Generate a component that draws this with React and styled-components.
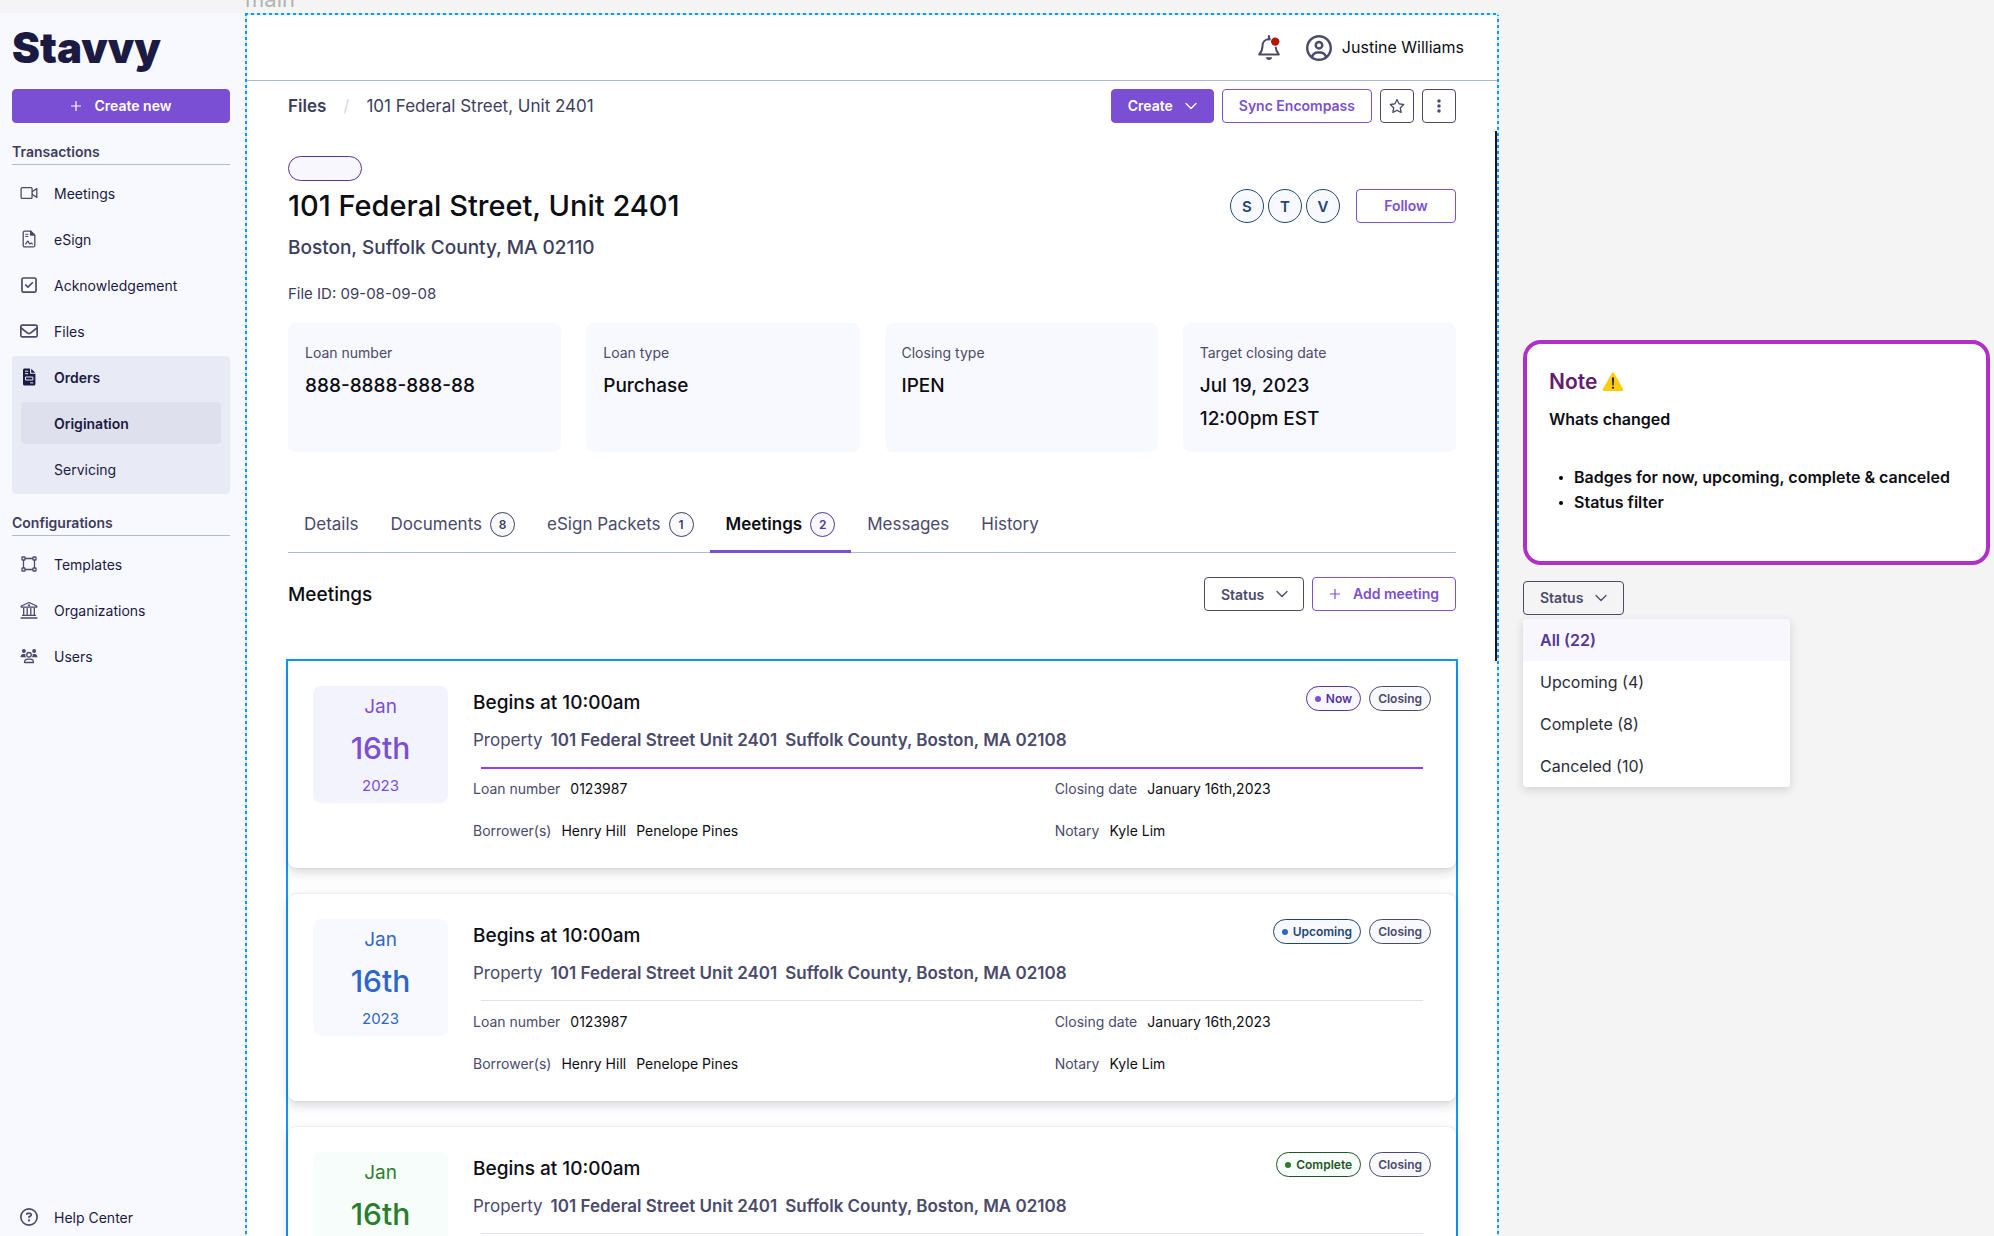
import React from 'react';
import styled, { createGlobalStyle, css } from 'styled-components';
import {
  FaRegSquareCheck,
  FaRegEnvelope,
  FaRegCircleUser,
  FaRegCircleQuestion,
  FaRegStar,
  FaEllipsisVertical,
} from 'react-icons/fa6';

const c = {
  canvas: '#f4f4f4',
  surface: '#f8f9fe',
  ink: '#0d0d14',
  navy: '#1b1a42',
  text: '#3d3d5c',
  muted: '#4a4a6b',
  rule: '#b4b9d3',
  purple: '#7b4fd3',
  deepPurple: '#56349a',
  lilac: '#f9f7fe',
  blue: '#0d99ff',
};

const GlobalStyle = createGlobalStyle`
  *, *::before, *::after { box-sizing: border-box; }
  body {
    margin: 0;
    background: ${c.canvas};
    color: ${c.ink};
    font-family: Inter, "Liberation Sans", sans-serif;
    font-size: 16px;
    line-height: 25px;
  }
  h1, h2, h3, p, ul, dl, dd { margin: 0; padding: 0; }
  ul { list-style: none; }
  a { color: inherit; text-decoration: none; }
  button, select { font: inherit; color: inherit; cursor: pointer; }
`;

/* ---------- canvas ---------- */

const Canvas = styled.div`
  display: grid;
  grid-template-columns: 245px minmax(0, 1fr) 495px;
  grid-template-rows: 13px minmax(0, 1fr);
  height: 100vh;
  overflow: hidden;
`;

const FrameLabel = styled.div`
  grid-column: 2;
  display: flex;
  align-items: flex-end;
  padding-bottom: 2px;
  overflow: hidden;
  font-size: 22px;
  line-height: 24px;
  color: #b3b3b3;
`;

/* ---------- sidebar ---------- */

const Sidebar = styled.aside`
  grid-row: 2;
  grid-column: 1;
  display: flex;
  flex-direction: column;
  padding: 14px 15px 0 12px;
  background: ${c.surface};
`;

const Logo = styled.a`
  height: 62px;
  font-size: 42px;
  line-height: 42px;
  font-weight: 900;
  color: ${c.navy};
`;

const NavHeading = styled.h2`
  margin: 19px 0 7px;
  padding-bottom: 2px;
  border-bottom: 1px solid ${c.rule};
  font-size: 14px;
  line-height: 20px;
  font-weight: 600;
  color: ${c.text};
`;

const NavList = styled.ul`
  display: flex;
  flex-direction: column;
  gap: 4px;
`;

const NavGroup = styled.li`
  padding-bottom: 4px;
  border-radius: 4px;
  background: #e8ebf5;
`;

const NavLink = styled.a`
  display: flex;
  align-items: center;
  gap: 16px;
  height: ${(p) => (p.$compact ? 38 : 42)}px;
  padding: 0 8px;
  font-size: 14px;
  font-weight: ${(p) => (p.$active ? 600 : 400)};
  color: ${c.navy};

  svg {
    flex: none;
    width: 18px;
    height: 18px;
    color: ${(p) => (p.$active ? c.navy : c.muted)};
  }
`;

const SubLink = styled.a`
  display: flex;
  align-items: center;
  height: 42px;
  margin: 4px 9px 0;
  padding-left: 33px;
  border-radius: 4px;
  background: ${(p) => (p.$active ? '#dee0ed' : 'transparent')};
  font-size: 14px;
  font-weight: ${(p) => (p.$active ? 600 : 400)};
  color: ${c.navy};
`;

const NavFooter = styled.div`
  margin-top: auto;
`;

/* ---------- buttons ---------- */

const tones = {
  solid: css`
    border-color: ${c.purple};
    background: ${c.purple};
    color: #fff;
  `,
  outline: css`
    border-color: ${c.purple};
    background: #fff;
    color: ${c.purple};
  `,
  neutral: css`
    border-color: ${c.muted};
    background: transparent;
    color: ${c.muted};
  `,
};

const Button = styled.button`
  display: inline-flex;
  align-items: center;
  justify-content: center;
  gap: 12px;
  flex: none;
  height: 34px;
  min-width: ${(p) => p.$min || 0}px;
  padding: 0 16px;
  border: 1px solid;
  border-radius: 4px;
  font-size: 14px;
  line-height: 20px;
  font-weight: 600;
  ${(p) => tones[p.$tone || 'outline']}
`;

const IconButton = styled(Button)`
  width: 34px;
  padding: 0;
`;

const SelectField = styled.label`
  position: relative;
  display: flex;
  align-items: center;
  width: 100px;
  color: ${c.muted};

  select {
    appearance: none;
    width: 100%;
    height: 34px;
    padding: 0 16px;
    border: 1px solid ${c.muted};
    border-radius: 4px;
    background: #fff;
    font-size: 14px;
    font-weight: 600;
  }

  svg {
    position: absolute;
    right: 16px;
    pointer-events: none;
  }
`;

/* ---------- main frame ---------- */

const dashX = `repeating-linear-gradient(90deg, ${c.blue} 0 3px, #cfe9fd 3px 6px)`;
const dashY = `repeating-linear-gradient(180deg, ${c.blue} 0 3px, #cfe9fd 3px 6px)`;

const Main = styled.main`
  position: relative;
  grid-row: 2;
  grid-column: 2;
  min-height: 0;
  padding: 2px;
  background:
    ${dashX} top / 100% 2px no-repeat,
    ${dashY} left / 2px 100% no-repeat,
    ${dashY} right / 2px 100% no-repeat,
    #fff;
`;

const ScrollThumb = styled.div`
  position: absolute;
  top: 118px;
  right: 2px;
  width: 2px;
  height: 530px;
  background: #16161c;
`;

const Header = styled.header`
  display: flex;
  align-items: center;
  justify-content: flex-end;
  gap: 25px;
  height: 66px;
  padding-right: 33px;
  border-bottom: 1px solid ${c.rule};
`;

const PlainButton = styled.button`
  display: flex;
  align-items: center;
  gap: 10px;
  padding: 0;
  border: 0;
  background: none;
  color: ${c.ink};

  svg {
    color: ${c.muted};
  }
`;

const Content = styled.div`
  padding: 8px 41px 0;
`;

const Bar = styled.div`
  display: flex;
  align-items: center;
  justify-content: space-between;
`;

const Cluster = styled.div`
  display: flex;
  align-items: center;
  gap: ${(p) => p.$gap || 8}px;
`;

const Crumbs = styled.nav`
  display: flex;
  gap: 17px;
  font-size: 17px;
  color: ${c.text};

  a {
    font-weight: 600;
  }

  i {
    font-style: normal;
    color: #d5d9e8;
  }
`;

const Pill = styled.span`
  display: inline-flex;
  align-items: center;
  gap: 5px;
  height: 25px;
  padding: 0 8px;
  border: 1px solid ${(p) => p.$color};
  border-radius: 13px;
  background: ${(p) => p.$bg};
  font-size: 12px;
  line-height: 16px;
  font-weight: 600;
  color: ${(p) => p.$color};
`;

const Dot = styled.span`
  width: 6px;
  height: 6px;
  border-radius: 50%;
  background: ${(p) => p.$color};
`;

const StatusPill = styled(Pill)`
  display: flex;
  width: 74px;
  margin-top: 33px;
`;

const Title = styled.h1`
  font-size: 29px;
  line-height: 34px;
  font-weight: 500;
`;

const TitleBar = styled(Bar)`
  margin-top: 8px;
`;

const Initial = styled.span`
  display: flex;
  align-items: center;
  justify-content: center;
  width: 34px;
  height: 34px;
  border: 1px solid #1f4772;
  border-radius: 50%;
  background: ${c.surface};
  font-size: 15px;
  font-weight: 600;
  color: #1f4772;
`;

const Address = styled.p`
  margin-top: 12px;
  font-size: 19px;
  font-weight: 500;
  color: ${c.text};
`;

const FileId = styled.p`
  margin-top: 21px;
  font-size: 15px;
  color: ${c.text};
`;

const Facts = styled.dl`
  display: grid;
  grid-template-columns: repeat(4, minmax(0, 1fr));
  gap: 25px;
  margin-top: 17px;
`;

const Fact = styled.div`
  min-height: 129px;
  padding: 17px;
  border-radius: 8px;
  background: ${c.surface};

  dt {
    margin-bottom: 4px;
    font-size: 14px;
    line-height: 25px;
    color: ${c.muted};
  }

  dd {
    font-size: 19px;
    line-height: 33px;
    font-weight: 500;
  }
`;

const Tabs = styled.nav`
  display: flex;
  margin-top: 46px;
  border-bottom: 1px solid ${c.rule};
`;

const Tab = styled.a`
  display: flex;
  align-items: center;
  gap: 8px;
  height: 55px;
  margin-bottom: -1px;
  padding: 0 16px;
  border-bottom: 3px solid ${(p) => (p.$active ? c.purple : 'transparent')};
  font-size: 17px;
  font-weight: ${(p) => (p.$active ? 600 : 400)};
  color: ${(p) => (p.$active ? c.ink : c.muted)};
`;

const Count = styled.span`
  display: flex;
  align-items: center;
  justify-content: center;
  width: 25px;
  height: 25px;
  border: 1px solid;
  border-radius: 50%;
  background: ${c.surface};
  font-size: 12px;
  font-weight: 600;
  color: ${(p) => (p.$active ? c.deepPurple : c.text)};
`;

const SectionBar = styled(Bar)`
  margin: 24px 0 48px;
`;

const SectionTitle = styled.h2`
  font-size: 19px;
  font-weight: 500;
`;

/* ---------- meeting cards ---------- */

const MeetingList = styled.ul`
  display: flex;
  flex-direction: column;
  gap: 26px;
  margin: 0 -2px;
  border: 2px solid ${c.blue};
  border-bottom: 0;
`;

const MeetingCard = styled.li`
  display: flex;
  align-items: flex-start;
  gap: 25px;
  padding: 25px 25px 27px;
  border-radius: 8px;
  background: #fff;
  box-shadow:
    0 0 2px rgba(30, 40, 70, 0.16),
    0 5px 10px rgba(40, 50, 70, 0.13),
    0 2px 20px rgba(0, 0, 0, 0.05);
`;

const DateTile = styled.time`
  display: flex;
  flex: none;
  flex-direction: column;
  align-items: center;
  width: 135px;
  height: 117px;
  padding-top: 8px;
  border-radius: 8px;
  background: ${(p) => p.$bg};
  color: ${(p) => p.$color};
  font-size: 19px;
  font-weight: 400;

  b {
    margin: 9px 0;
    font-size: 30px;
    line-height: 40px;
    font-weight: 500;
  }

  small {
    font-size: 15px;
    line-height: 18px;
  }
`;

const MeetingBody = styled.div`
  flex: 1;
  min-width: 0;
`;

const MeetingHead = styled(Bar)`
  align-items: flex-start;

  h3 {
    font-size: 19px;
    line-height: 33px;
    font-weight: 500;
  }
`;

const Property = styled.p`
  display: flex;
  gap: 8px;
  margin-top: 9px;
  font-size: 17px;
  color: ${c.muted};

  strong {
    font-weight: 600;
  }
`;

const Divider = styled.div`
  height: 2px;
  margin: 14px 8px 10px;
  border-top: ${(p) => (p.$current ? '2px solid #8f3ffb' : '1px solid #e0e3ee')};
`;

const Facets = styled.dl`
  display: grid;
  grid-template-columns: minmax(0, 17fr) minmax(0, 11fr);
  row-gap: 22px;
  font-size: 14px;
  line-height: 20px;

  div {
    display: flex;
    gap: 10px;
  }

  dt {
    color: ${c.muted};
  }
`;

/* ---------- annotations ---------- */

const Annotations = styled.section`
  grid-row: 2;
  grid-column: 3;
  padding: 327px 4px 0 24px;
`;

const Note = styled.article`
  padding: 25px 21px 46px 22px;
  border: 4px solid #b02fc4;
  border-radius: 18px;
  background: #fff;

  h2 {
    display: flex;
    align-items: center;
    gap: 5px;
    font-size: 21px;
    line-height: 25px;
    font-weight: 600;
    color: #651b70;
  }

  p,
  li {
    font-weight: 600;
  }

  p {
    margin: 13px 0 33px;
  }

  ul {
    padding-left: 25px;
  }

  li {
    white-space: nowrap;
  }

  li::before {
    content: '';
    float: left;
    width: 4px;
    height: 4px;
    margin: 11px 0 0 -15px;
    border-radius: 50%;
    background: #000;
  }
`;

const Dropdown = styled.div`
  margin-top: 16px;
`;

const Menu = styled.ul`
  width: 267px;
  margin-top: 4px;
  overflow: hidden;
  border-radius: 4px;
  background: #fff;
  box-shadow: 0 3px 10px rgba(30, 40, 70, 0.16);
`;

const MenuItem = styled.button`
  display: block;
  width: 100%;
  height: 42px;
  padding: 0 17px;
  border: 0;
  background: ${(p) => (p.$active ? c.lilac : '#fff')};
  text-align: left;
  font-weight: ${(p) => (p.$active ? 600 : 400)};
  color: ${(p) => (p.$active ? c.deepPurple : '#2b2b38')};
`;

/* ---------- icons ---------- */

const Icon = ({ size = 18, box = 18, children, width = 1.3 }) => (
  <svg
    width={size}
    height={size}
    viewBox={`0 0 ${box} ${box}`}
    fill="none"
    stroke="currentColor"
    strokeWidth={width}
    strokeLinejoin="round"
    aria-hidden="true"
  >
    {children}
  </svg>
);

const Plus = () => (
  <Icon size={12} box={12} width={1.2}>
    <path d="M6 1v10M1 6h10" />
  </Icon>
);

const Chevron = () => (
  <Icon size={12} box={12} width={1.3}>
    <path d="M1 3.5l5 5 5-5" strokeLinecap="round" />
  </Icon>
);

const VideoIcon = () => (
  <Icon>
    <rect x="1.1" y="3.6" width="11" height="10.8" rx="1.2" />
    <path d="M12.1 7.8l4.7-3.2v8.8l-4.7-3.2" />
  </Icon>
);

const SignIcon = () => (
  <Icon>
    <path d="M4.7 1.1h6.1l4 4v10.3c0 .9-.6 1.5-1.5 1.5H4.7c-.9 0-1.5-.6-1.5-1.5V2.6c0-.9.6-1.5 1.5-1.5z" />
    <path d="M10.6 1.3v3.8h4z" fill="currentColor" />
    <path d="M5.3 4.3h3M5.3 6.5h3" strokeWidth="1" />
    <path d="M5.2 14.2c1.3-.4 1.6-3 2.8-3 1 0 .5 2.6 1.6 2.6.8 0 .9-.9 1.7-.6.5.2.7.9 1.5.9" />
  </Icon>
);

const OrdersIcon = () => (
  <svg width="18" height="18" viewBox="0 0 18 18" aria-hidden="true">
    <path
      fill="currentColor"
      d="M4.5.5H10v4.3c0 .6.4 1 1 1h4.4V16c0 .8-.7 1.5-1.5 1.5H4.500c-.8 0-1.500-.7-1.500-1.500V2C3 1.200 3.700.500 4.500.500zM11.200.700l4.100 4H11.200z"
    />
    <path
      fill="none"
      stroke="#e8ebf5"
      strokeWidth="1"
      d="M5 3.200h3.200M5 5.700h3.200M5.500 9h7.400v3H5.500zM10.200 14.900h3"
    />
  </svg>
);

const TemplateIcon = () => (
  <Icon>
    <path d="M5 3.5h8M5 14.5h8M3.5 5v8M14.5 5v8" />
    <rect x="2" y="2" width="3" height="3" rx=".6" />
    <rect x="13" y="2" width="3" height="3" rx=".6" />
    <rect x="2" y="13" width="3" height="3" rx=".6" />
    <rect x="13" y="13" width="3" height="3" rx=".6" />
  </Icon>
);

const InstitutionIcon = () => (
  <Icon>
    <path d="M1.2 6.1V5L9 1.5 16.8 5v1.1z" />
    <path d="M3.7 6.8v7M7.2 6.8v7M10.8 6.8v7M14.3 6.8v7M2 14.3h14M.6 17h16.8" />
    <circle cx="9" cy="4.3" r=".5" fill="currentColor" />
  </Icon>
);

const UsersIcon = () => (
  <Icon>
    <circle cx="9" cy="7.8" r="2.3" />
    <path d="M4.5 15.5c0-2 1.5-3.3 3.3-3.3h2.4c1.8 0 3.3 1.3 3.3 3.3z" />
    <g fill="currentColor" stroke="none">
      <circle cx="3.9" cy="4.1" r="2" />
      <circle cx="14.1" cy="4.1" r="2" />
      <path d="M.5 10.3c0-1.9 1.1-3.2 2.8-3.2h2.2c-.4 1.2-.1 2.3.6 3.2z" />
      <path d="M17.5 10.3c0-1.9-1.1-3.2-2.8-3.2h-2.2c.4 1.2.1 2.3-.6 3.2z" />
    </g>
  </Icon>
);

const BellIcon = () => (
  <svg width="24" height="26" viewBox="0 0 24 26" fill="none" aria-hidden="true">
    <path
      d="M16.8 6c-1-.8-2.8-1.7-4.8-1.7-4.1 0-6.5 3-6.5 6.6 0 4.2-1.3 6.2-3.3 8.6h19.6c-1.9-2.2-3-4.2-3.2-7.9"
      stroke="currentColor"
      strokeWidth="2"
      strokeLinejoin="round"
    />
    <path d="M12 1.2v3" stroke="currentColor" strokeWidth="2.2" strokeLinecap="round" />
    <path d="M8.8 22.3h6.4c-.3 1.6-1.5 2.7-3.2 2.7s-2.9-1.1-3.2-2.7z" fill="currentColor" />
    <circle cx="18.2" cy="6.6" r="5" fill="#fff" />
    <circle cx="18.2" cy="6.6" r="4.2" fill="#b81407" />
  </svg>
);

const WarningIcon = () => (
  <svg width="22" height="20" viewBox="0 0 22 20" role="img" aria-label="Warning">
    <path
      d="M9.8 1.3a1.4 1.4 0 0 1 2.4 0l8.9 15.8c.5.9-.1 1.9-1.1 1.9H2c-1 0-1.6-1-1.1-1.9z"
      fill="#ffcc0d"
    />
    <path d="M10 5.5h2l-.3 8h-1.4z" fill="#1d1d1d" />
    <circle cx="11" cy="15.8" r="1.1" fill="#1d1d1d" />
  </svg>
);

/* ---------- data ---------- */

const facts = [
  ['Loan number', ['888-8888-888-88']],
  ['Loan type', ['Purchase']],
  ['Closing type', ['IPEN']],
  ['Target closing date', ['Jul 19, 2023', '12:00pm EST']],
];

const tabs = [
  { name: 'Details' },
  { name: 'Documents', count: 8 },
  { name: 'eSign Packets', count: 1 },
  { name: 'Meetings', count: 2, active: true },
  { name: 'Messages' },
  { name: 'History' },
];

const meetings = [
  { status: 'Now', current: true, tile: '#f3f3fd', ink: c.purple, pill: c.deepPurple, bg: c.lilac },
  { status: 'Upcoming', tile: '#f8f9fe', ink: '#2d66c9', pill: '#1f4772', bg: '#f7f9fe' },
  { status: 'Complete', tile: '#f6fdfa', ink: '#2a7d2e', pill: '#1f5524', bg: '#f6fdfa' },
];

const filters = ['All (22)', 'Upcoming (4)', 'Complete (8)', 'Canceled (10)'];

const Meeting = ({ status, current, tile, ink, pill, bg }) => (
  <MeetingCard>
    <DateTile dateTime="2023-01-16" $bg={tile} $color={ink}>
      Jan
      <b>16th</b>
      <small>2023</small>
    </DateTile>
    <MeetingBody>
      <MeetingHead>
        <h3>Begins at 10:00am</h3>
        <Cluster>
          <Pill $color={pill} $bg={bg}>
            <Dot $color={ink} />
            {status}
          </Pill>
          <Pill $color={c.muted} $bg={c.surface}>
            Closing
          </Pill>
        </Cluster>
      </MeetingHead>
      <Property>
        <span>Property</span>
        <strong>101 Federal Street Unit 2401</strong>
        <strong>Suffolk County, Boston, MA 02108</strong>
      </Property>
      <Divider $current={current} />
      <Facets>
        <div>
          <dt>Loan number</dt>
          <dd>0123987</dd>
        </div>
        <div>
          <dt>Closing date</dt>
          <dd>January 16th,2023</dd>
        </div>
        <div>
          <dt>Borrower(s)</dt>
          <dd>Henry Hill</dd>
          <dd>Penelope Pines</dd>
        </div>
        <div>
          <dt>Notary</dt>
          <dd>Kyle Lim</dd>
        </div>
      </Facets>
    </MeetingBody>
  </MeetingCard>
);

const NavItem = ({ icon, children, active, compact }) => (
  <NavLink href="#" $active={active} $compact={compact}>
    {icon}
    {children}
  </NavLink>
);

export default function App() {
  return (
    <>
      <GlobalStyle />
      <Canvas>
        <FrameLabel>main</FrameLabel>

        <Sidebar>
          <Logo href="#">Stavvy</Logo>
          <Button $tone="solid">
            <Plus />
            Create new
          </Button>
          <NavHeading>Transactions</NavHeading>
          <NavList>
            <li><NavItem icon={<VideoIcon />}>Meetings</NavItem></li>
            <li><NavItem icon={<SignIcon />}>eSign</NavItem></li>
            <li><NavItem icon={<FaRegSquareCheck />}>Acknowledgement</NavItem></li>
            <li><NavItem icon={<FaRegEnvelope />}>Files</NavItem></li>
            <NavGroup>
              <NavItem icon={<OrdersIcon />} active>Orders</NavItem>
              <SubLink href="#" $active>Origination</SubLink>
              <SubLink href="#">Servicing</SubLink>
            </NavGroup>
          </NavList>
          <NavHeading>Configurations</NavHeading>
          <NavList>
            <li><NavItem icon={<TemplateIcon />}>Templates</NavItem></li>
            <li><NavItem icon={<InstitutionIcon />}>Organizations</NavItem></li>
            <li><NavItem icon={<UsersIcon />}>Users</NavItem></li>
          </NavList>
          <NavFooter>
            <NavItem icon={<FaRegCircleQuestion />} compact>Help Center</NavItem>
          </NavFooter>
        </Sidebar>

        <Main>
          <ScrollThumb />
          <Header>
            <PlainButton aria-label="Notifications">
              <BellIcon />
            </PlainButton>
            <PlainButton>
              <FaRegCircleUser size={26} />
              Justine Williams
            </PlainButton>
          </Header>

          <Content>
            <Bar>
              <Crumbs>
                <a href="#">Files</a>
                <i>/</i>
                <span>101 Federal Street, Unit 2401</span>
              </Crumbs>
              <Cluster>
                <Button $tone="solid">
                  Create
                  <Chevron />
                </Button>
                <Button>Sync Encompass</Button>
                <IconButton $tone="neutral" aria-label="Favorite">
                  <FaRegStar size={16} />
                </IconButton>
                <IconButton $tone="neutral" aria-label="More">
                  <FaEllipsisVertical size={16} />
                </IconButton>
              </Cluster>
            </Bar>

            <StatusPill $color={c.deepPurple} $bg={c.lilac} />
            <TitleBar>
              <Title>101 Federal Street, Unit 2401</Title>
              <Cluster $gap={16}>
                <Cluster $gap={4}>
                  <Initial>S</Initial>
                  <Initial>T</Initial>
                  <Initial>V</Initial>
                </Cluster>
                <Button $min={100}>Follow</Button>
              </Cluster>
            </TitleBar>
            <Address>Boston, Suffolk County, MA 02110</Address>
            <FileId>File ID: 09-08-09-08</FileId>

            <Facts>
              {facts.map(([label, lines]) => (
                <Fact key={label}>
                  <dt>{label}</dt>
                  {lines.map((line) => (
                    <dd key={line}>{line}</dd>
                  ))}
                </Fact>
              ))}
            </Facts>

            <Tabs>
              {tabs.map((t) => (
                <Tab key={t.name} href="#" $active={t.active}>
                  {t.name}
                  {t.count && <Count $active={t.active}>{t.count}</Count>}
                </Tab>
              ))}
            </Tabs>

            <SectionBar>
              <SectionTitle>Meetings</SectionTitle>
              <Cluster>
                <SelectField>
                  <select aria-label="Status" defaultValue="Status">
                    <option>Status</option>
                    {filters.map((f) => (
                      <option key={f}>{f}</option>
                    ))}
                  </select>
                  <Chevron />
                </SelectField>
                <Button>
                  <Plus />
                  Add meeting
                </Button>
              </Cluster>
            </SectionBar>

            <MeetingList>
              {meetings.map((m) => (
                <Meeting key={m.status} {...m} />
              ))}
            </MeetingList>
          </Content>
        </Main>

        <Annotations>
          <Note>
            <h2>
              Note
              <WarningIcon />
            </h2>
            <p>Whats changed</p>
            <ul>
              <li>Badges for now, upcoming, complete &amp; canceled</li>
              <li>Status filter</li>
            </ul>
          </Note>
          <Dropdown>
            <Button $tone="neutral" $min={100} aria-haspopup="menu" aria-expanded="true">
              Status
              <Chevron />
            </Button>
            <Menu role="menu">
              {filters.map((f, i) => (
                <li key={f} role="none">
                  <MenuItem role="menuitem" $active={i === 0}>{f}</MenuItem>
                </li>
              ))}
            </Menu>
          </Dropdown>
        </Annotations>
      </Canvas>
    </>
  );
}
